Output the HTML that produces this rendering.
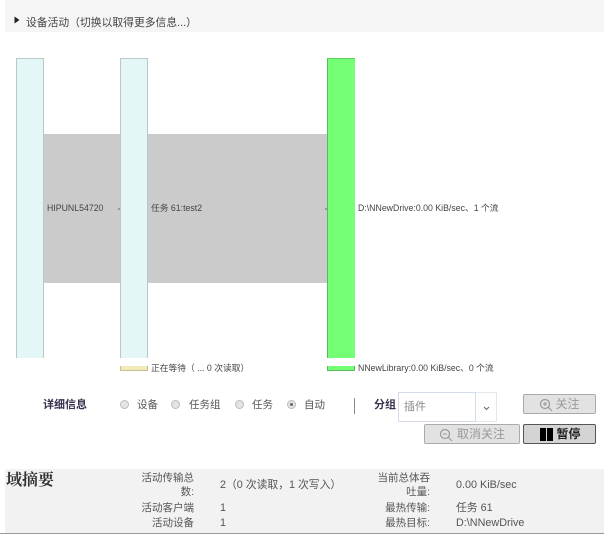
<!DOCTYPE html>
<html><head><meta charset="utf-8">
<style>
html,body{margin:0;padding:0;background:#fff;}
body{width:604px;height:534px;position:relative;overflow:hidden;font-family:"Liberation Sans","Noto Sans CJK SC",sans-serif;color:#444;}
#w{position:absolute;left:0;top:0;width:604px;height:534px;filter:blur(0.3px);}
.a{position:absolute;white-space:nowrap;}
.bar{position:absolute;box-sizing:border-box;width:28px;top:58px;height:300px;background:#e4f6f6;border:1px solid #b6c8c8;border-bottom:none;}
.t{position:absolute;white-space:nowrap;font-size:8.75px;line-height:12px;color:#444;}
.l{position:absolute;white-space:nowrap;font-size:10.5px;line-height:14px;color:#555;}
.radio{position:absolute;box-sizing:border-box;width:9px;height:9px;border-radius:50%;top:400px;background:#e4e4e4;border:1px solid #bbb;}
.btn{position:absolute;box-sizing:border-box;background:#e2e2e2;border:1px solid #aaa;border-radius:2px;font-size:12px;color:#999;text-align:center;white-space:nowrap;}
.r{position:absolute;text-align:right;font-size:10.5px;line-height:14px;color:#555;}
.v{position:absolute;white-space:nowrap;font-size:10.8px;line-height:15px;color:#555;}
</style></head><body><div id="w">
<div class="a" style="left:5px;top:0;width:599px;height:32px;background:#f5f5f5;"></div>
<svg class="a" style="left:14px;top:16px" width="6" height="8"><path d="M0.5 0.5L5.5 4L0.5 7.5Z" fill="#222"/></svg>
<div class="a" style="left:26px;top:16px;font-size:10.8px;line-height:14px;color:#444;">设备活动（切换以取得更多信息...）</div>

<div class="a" style="left:44px;top:134px;width:283px;height:149px;background:#cbcbcb;"></div>
<div class="bar" style="left:16px;"></div>
<div class="bar" style="left:120px;"></div>
<div class="bar" style="left:327px;background:#75ff75;border:none;border-left:1px solid #5fb85f;border-top:1px solid #5fd05f;"></div>
<div class="a" style="left:118px;top:208px;width:2px;height:2px;background:#999;"></div>
<div class="a" style="left:325px;top:208px;width:2px;height:2px;background:#999;"></div>
<div class="t" style="left:47px;top:202px;">HIPUNL54720</div>
<div class="t" style="left:151px;top:202px;">任务 61:test2</div>
<div class="t" style="left:358px;top:202px;">D:\NNewDrive:0.00 KiB/sec、1 个流</div>

<div class="a" style="left:120px;top:366px;width:28px;height:5px;box-sizing:border-box;background:#f0e9b8;border:1px solid #c8c090;border-top:none;"></div>
<div class="a" style="left:327px;top:366px;width:28px;height:5px;box-sizing:border-box;background:#75ff75;border:1px solid #5fb85f;border-top:none;"></div>
<div class="t" style="left:151px;top:362px;">正在等待（ ... 0 次读取）</div>
<div class="t" style="left:358px;top:362px;">NNewLibrary:0.00 KiB/sec、0 个流</div>

<div class="a" style="left:43px;top:398px;font-size:11px;line-height:14px;font-weight:bold;color:#3a3050;">详细信息</div>
<div class="radio" style="left:120px;"></div><div class="l" style="left:137px;top:398px;">设备</div>
<div class="radio" style="left:171px;"></div><div class="l" style="left:189px;top:398px;">任务组</div>
<div class="radio" style="left:235px;"></div><div class="l" style="left:252px;top:398px;">任务</div>
<div class="radio" style="left:287px;"></div>
<div class="a" style="left:290px;top:403px;width:3px;height:3px;border-radius:50%;background:#666;"></div>
<div class="l" style="left:304px;top:398px;">自动</div>
<div class="a" style="left:354px;top:398px;width:1px;height:16px;background:#888;"></div>
<div class="a" style="left:374px;top:398px;font-size:11px;line-height:14px;font-weight:bold;color:#3a3050;">分组</div>

<div class="a" style="left:398px;top:392px;width:99px;height:30px;box-sizing:border-box;border:1px solid #e4e7ec;background:#fff;"></div>
<div class="a" style="left:398px;top:392px;width:78px;height:30px;box-sizing:border-box;border:1px solid #d4dcec;background:#fff;font-size:11px;line-height:28px;color:#888;padding-left:5px;">插件</div>
<svg class="a" style="left:483px;top:406px" width="7" height="5"><path d="M1 1L3.5 3.5L6 1" fill="none" stroke="#666" stroke-width="1"/></svg>

<div class="btn" style="left:523px;top:394px;width:73px;height:20px;line-height:18px;padding-left:16px;">关注</div>
<svg class="a" style="left:539px;top:398px" width="14" height="14"><circle cx="6" cy="6" r="4.5" fill="none" stroke="#999" stroke-width="1.2"/><path d="M9.3 9.3L13 13M4 6H8M6 4V8" stroke="#999" stroke-width="1.1" fill="none"/></svg>
<div class="btn" style="left:424px;top:424px;width:96px;height:20px;line-height:18px;padding-left:18px;">取消关注</div>
<svg class="a" style="left:439px;top:428px" width="14" height="14"><circle cx="6" cy="6" r="4.5" fill="none" stroke="#999" stroke-width="1.2"/><path d="M9.3 9.3L13 13M4 6H8" stroke="#999" stroke-width="1.1" fill="none"/></svg>
<div class="btn" style="left:523px;top:424px;width:73px;height:20px;line-height:18px;padding-left:18px;border:1px solid #555;background:#d4d4d4;color:#222;font-weight:bold;">暂停</div>
<div class="a" style="left:540px;top:428px;width:6px;height:13px;background:#000;"></div>
<div class="a" style="left:547px;top:428px;width:6px;height:13px;background:#000;"></div>

<div class="a" style="left:5px;top:469px;width:599px;height:64px;background:#f2f2f2;"></div>
<div class="a" style="left:0;top:533px;width:604px;height:1px;background:#999;"></div>
<div class="a" style="left:6px;top:471px;font-family:'Liberation Serif','Noto Serif CJK SC',serif;font-size:16px;line-height:20px;font-weight:bold;color:#333;">域摘要</div>

<div class="r" style="left:130px;top:471px;width:64px;">活动传输总<br>数:</div>
<div class="r" style="left:130px;top:501px;width:64px;">活动客户端</div>
<div class="r" style="left:130px;top:516px;width:64px;">活动设备</div>
<div class="v" style="left:220px;top:478px;">2（0 次读取，1 次写入）</div>
<div class="v" style="left:220px;top:501px;">1</div>
<div class="v" style="left:220px;top:516px;">1</div>

<div class="r" style="left:366px;top:471px;width:64px;">当前总体吞<br>吐量:</div>
<div class="r" style="left:366px;top:501px;width:64px;">最热传输:</div>
<div class="r" style="left:366px;top:516px;width:64px;">最热目标:</div>
<div class="v" style="left:456px;top:478px;">0.00 KiB/sec</div>
<div class="v" style="left:456px;top:501px;">任务 61</div>
<div class="v" style="left:456px;top:516px;">D:\NNewDrive</div>
</div></body></html>
